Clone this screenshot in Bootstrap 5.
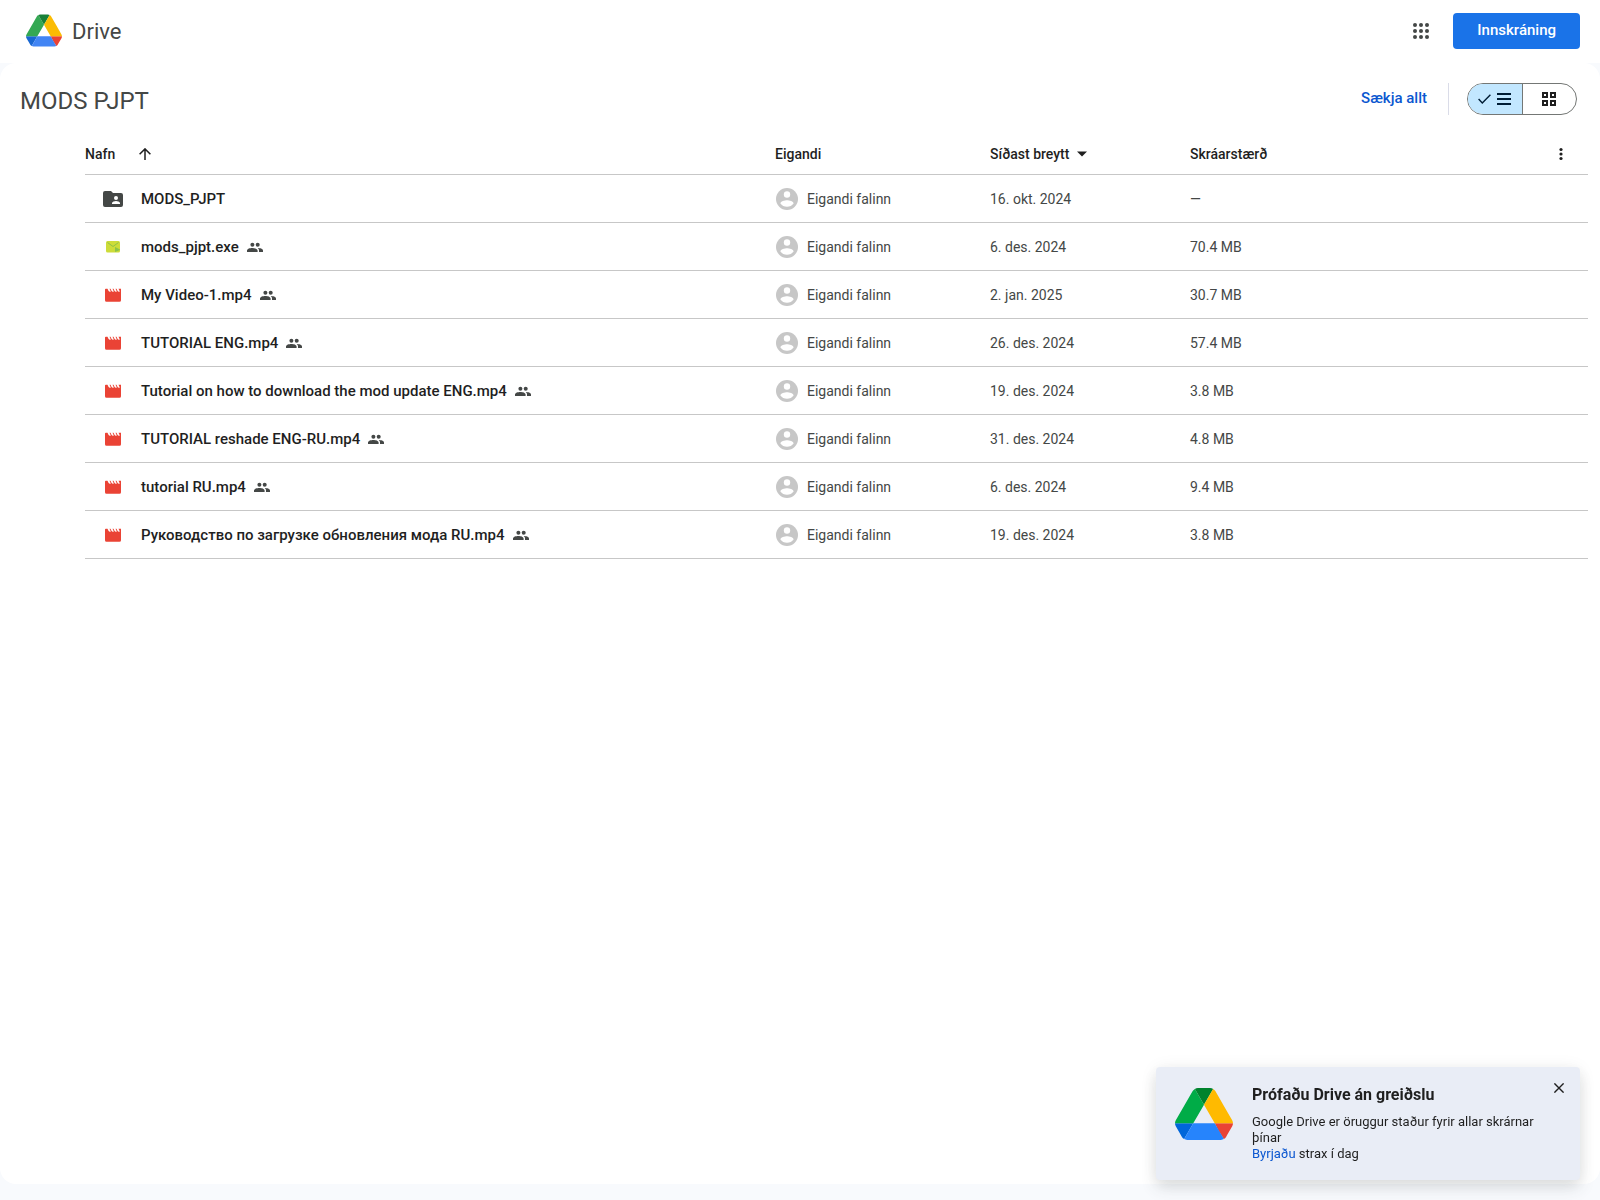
<!DOCTYPE html>
<html lang="is">
<head>
<meta charset="utf-8">
<meta name="viewport" content="width=device-width, initial-scale=1">
<title>MODS PJPT – Google Drive</title>
<link href="https://cdn.jsdelivr.net/npm/bootstrap@5.3.0/dist/css/bootstrap.min.css" rel="stylesheet">
<style>
  body { font-family: Roboto, "Liberation Sans", sans-serif; font-size: 14px; line-height: 20px; color: #1f1f1f; background: #f8fafd; }
  svg { display: block; flex: none; }
  .topbar { height: 63px; padding: 0 20px 2px 26px; }
  .brand-name { font-size: 22px; line-height: 28px; color: #444746; padding: 2px 0 0 2px; }
  .apps-btn { width: 40px; height: 40px; color: #444746; }
  .signin { height: 36px; padding: 0 23px; border-radius: 4px; background: #1a73e8; color: #fff; font-size: 15px; font-weight: 500; }
  .signin:hover { background: #1765cc; color: #fff; }
  .panel { border-radius: 16px; margin-bottom: 16px; padding: 0 12px 0 20px; }
  .folder-bar { height: 68px; padding: 3px 11px 0 0; }
  .folder-title { font-size: 24px; line-height: 32px; font-weight: 400; color: #444746; padding-top: 5px; }
  .download-all { color: #0b57d0; font-size: 15px; font-weight: 500; padding: 6px 21px; }
  .separator { width: 1px; height: 32px; background: #dadce8; margin-right: 18px; }
  .view-toggle { height: 32px; width: 110px; border: 1px solid #747775; border-radius: 16px; overflow: hidden; }
  .view-toggle .btn { flex: 1 1 0; border: 0; padding: 0; border-radius: 0; color: #1f1f1f; gap: 6px; }
  .view-toggle .btn + .btn { border-left: 1px solid #747775; }
  .view-toggle .active { background: #c2e7ff; color: #001d35; }
  .file-list { margin-left: 65px; }
  .file-table { table-layout: fixed; --bs-table-bg: transparent; margin: 0; }
  .file-table th, .file-table td { height: 48px; padding: 2px 0 0; vertical-align: middle; border-bottom: 1px solid #c7c7c7; }
  .file-table thead th { height: 43px; padding-top: 4px; font-size: 14px; font-weight: 500; color: #1f1f1f; }
  .file-table td { color: #444746; font-size: 14px; }
  .file-table .sort-btn { padding: 0; font-size: 14px; line-height: 20px; font-weight: 500; color: #1f1f1f; border: 0; }
  .col-owner { width: 215px; }
  .col-date { width: 200px; }
  .col-size { width: 358px; }
  .col-menu { width: 40px; }
  .type-icon { width: 56px; display: flex; justify-content: center; }
  .file-link { color: #1f1f1f; font-size: 15px; font-weight: 500; text-decoration: none; }
  .promo { right: 20px; bottom: 20px; width: 424px; border-radius: 4px; background: #e9edf6; z-index: 10; padding: 18px 12px 18px 19px; box-shadow: 0 8px 16px rgba(60,64,67,.14), 0 2px 18px rgba(60,64,67,.07); }
  .promo-title { font-size: 16px; line-height: 20px; font-weight: 700; margin-bottom: 9px; }
  .promo-text { font-size: 13px; line-height: 16px; }
  .promo-text a { color: #0b57d0; text-decoration: none; }
  .promo-logo { margin: 3px 19px 0 0; }
  .promo-close { margin-top: -6px; }
</style>
</head>
<body class="d-flex flex-column min-vh-100">

<svg width="0" height="0" class="position-absolute" aria-hidden="true">
  <symbol id="i-drive" viewBox="0 0 87.3 78">
    <path d="M6.6 66.85l3.85 6.65c.8 1.4 1.95 2.5 3.3 3.3l13.75-23.8H0c0 1.55.4 3.1 1.2 4.5z" fill="#0066da"/>
    <path d="M43.65 25L29.9 1.2c-1.35.8-2.5 1.9-3.3 3.3l-25.4 44C.4 49.9 0 51.450 0 53h27.5z" fill="#00ac47"/>
    <path d="M73.55 76.8c1.35-.8 2.5-1.9 3.3-3.3l1.6-2.75L86.100 57.5c.8-1.4 1.2-2.95 1.2-4.5H59.798l5.852 11.5z" fill="#ea4335"/>
    <path d="M43.65 25L57.400 1.2C56.050.4 54.500 0 52.900 0H34.400c-1.6 0-3.150.450-4.5 1.2z" fill="#00832d"/>
    <path d="M59.800 53H27.500L13.750 76.800c1.350.8 2.900 1.200 4.500 1.200h50.800c1.600 0 3.150-.450 4.500-1.200z" fill="#2684fc"/>
    <path d="M73.400 26.500L60.700 4.500c-.8-1.400-1.950-2.500-3.300-3.300L43.650 25l16.150 28h27.450c0-1.550-.4-3.100-1.200-4.500z" fill="#ffba00"/>
  </symbol>
  <symbol id="i-drive-bar" viewBox="0 0 87.3 78">
    <path d="M6.6 66.85l3.85 6.65c.8 1.4 1.95 2.5 3.3 3.3l13.75-23.8H0c0 1.55.4 3.1 1.2 4.5z" fill="#1967d2"/>
    <path d="M43.65 25L29.9 1.2c-1.35.8-2.5 1.9-3.3 3.3l-25.4 44C.4 49.9 0 51.450 0 53h27.5z" fill="#34a853"/>
    <path d="M73.55 76.8c1.35-.8 2.5-1.9 3.3-3.3l1.6-2.75L86.100 57.5c.8-1.4 1.2-2.95 1.2-4.5H59.798l5.852 11.5z" fill="#ea4335"/>
    <path d="M43.65 25L57.400 1.2C56.050.4 54.500 0 52.900 0H34.400c-1.6 0-3.150.450-4.5 1.2z" fill="#188038"/>
    <path d="M59.800 53H27.500L13.750 76.800c1.350.8 2.900 1.200 4.500 1.200h50.800c1.600 0 3.150-.450 4.500-1.200z" fill="#4285f4"/>
    <path d="M73.400 26.500L60.700 4.500c-.8-1.400-1.950-2.500-3.300-3.300L43.650 25l16.150 28h27.450c0-1.550-.4-3.100-1.200-4.500z" fill="#fbbc04"/>
  </symbol>
  <symbol id="i-video" viewBox="0 0 16 16"><path d="M0 2.500V13.300a1.500 1.500 0 0 0 1.500 1.500h13a1.500 1.500 0 0 0 1.500-1.500V1.800h-2.500l1.300 2.700q-1.400.6-2.200-.5l-1.100-2.200h-1l1.300 2.700q-1.400.6-2.200-.5l-1.100-2.200h-1l1.300 2.700q-1.400.6-2.200-.5L5.500 1.800h-1l1.300 2.700q-1.400.6-2.200-.5L2.500 1.800H.8a.8.8 0 0 0-.8.700z" fill="#ea4335"/></symbol>
  <symbol id="i-people" viewBox="0 0 16 16"><g fill="#444746"><circle cx="5.400" cy="5.800" r="2"/><circle cx="10.700" cy="5.800" r="2"/><path d="M0 13v-1.400C0 9.900 3 9.100 5.300 9.100s5.300.8 5.300 2.500V13zM12 13v-1.400c0-1.100-.5-1.900-1.300-2.500 2.300 0 5.300.7 5.300 2.500V13z"/></g></symbol>
  <symbol id="i-owner" viewBox="0 0 22 22"><circle cx="11" cy="11" r="11" fill="#c7c7c7"/><circle cx="11" cy="6.500" r="3.200" fill="#fff"/><path d="M4.400 15.500c0-2.200 4.400-3.300 6.600-3.300s6.600 1.100 6.600 3.300c-1.400 2-3.900 3.300-6.600 3.300s-5.200-1.300-6.600-3.300z" fill="#fff"/></symbol>
</svg>

<header class="topbar bg-white d-flex align-items-center justify-content-between">
  <a href="#" class="d-flex align-items-center gap-2 text-decoration-none">
    <svg width="36" height="33"><use href="#i-drive-bar"/></svg>
    <span class="brand-name">Drive</span>
  </a>
  <div class="d-flex align-items-center gap-2">
    <button class="apps-btn btn p-0 me-1 d-flex align-items-center justify-content-center" aria-label="Google forrit">
      <svg width="16" height="16" viewBox="0 0 16 16" fill="currentColor"><circle cx="2" cy="2" r="2"/><circle cx="8" cy="2" r="2"/><circle cx="14" cy="2" r="2"/><circle cx="2" cy="8" r="2"/><circle cx="8" cy="8" r="2"/><circle cx="14" cy="8" r="2"/><circle cx="2" cy="14" r="2"/><circle cx="8" cy="14" r="2"/><circle cx="14" cy="14" r="2"/></svg>
    </button>
    <a href="#" role="button" class="signin btn d-flex align-items-center">Innskráning</a>
  </div>
</header>

<main class="panel bg-white flex-grow-1">
  <div class="folder-bar d-flex align-items-center justify-content-between">
    <h1 class="folder-title m-0">MODS PJPT</h1>
    <div class="d-flex align-items-center">
      <button class="download-all btn border-0">Sækja allt</button>
      <span class="separator"></span>
      <div class="view-toggle d-flex" role="group" aria-label="Útlit">
        <button class="btn active d-flex align-items-center justify-content-center" aria-pressed="true" aria-label="Listi">
          <svg width="13" height="10" viewBox="0 0 13 10" fill="none" stroke="currentColor" stroke-width="1.400"><path d="M.6 5l3.700 4L12.400.7"/></svg>
          <svg width="14" height="12" viewBox="0 0 14 12" fill="currentColor"><path d="M0 0h14v2H0zM0 5h14v2H0zM0 10h14v2H0z"/></svg>
        </button>
        <button class="btn d-flex align-items-center justify-content-center" aria-pressed="false" aria-label="Tafla">
          <svg width="14" height="14" viewBox="0 0 14 14" fill="none" stroke="currentColor" stroke-width="2"><path d="M1 1h4v4H1zM9 1h4v4H9zM1 9h4v4H1zM9 9h4v4H9z"/></svg>
        </button>
      </div>
    </div>
  </div>

  <div class="file-list">
    <table class="file-table table">
      <thead>
        <tr>
          <th scope="col"><button class="sort-btn btn d-flex align-items-center gap-4">Nafn
            <svg width="12" height="12" viewBox="0 0 12 12" fill="none" stroke="currentColor" stroke-width="1.500"><path d="M6 12V1M.6 6.300L6 .9l5.400 5.400"/></svg></button></th>
          <th scope="col" class="col-owner">Eigandi</th>
          <th scope="col" class="col-date"><button class="sort-btn btn d-flex align-items-center">Síðast breytt
            <svg class="ms-2" width="10" height="6" viewBox="0 0 10 6" fill="currentColor"><path d="M0 .5h10L5 5.500z"/></svg></button></th>
          <th scope="col" class="col-size">Skráarstærð</th>
          <th scope="col" class="col-menu"><button class="sort-btn btn ps-2 d-flex align-items-center" aria-label="Fleiri valkostir"><svg width="12" height="14" viewBox="0 0 12 14" fill="currentColor"><circle cx="5" cy="2.500" r="1.600"/><circle cx="5" cy="7" r="1.600"/><circle cx="5" cy="11.500" r="1.600"/></svg></button></th>
        </tr>
      </thead>
      <tbody>
        <tr>
          <td><div class="d-flex align-items-center"><span class="type-icon"><svg width="20" height="16" viewBox="0 0 20 16"><path d="M2 0h6l2 2h8a2 2 0 0 1 2 2v10a2 2 0 0 1-2 2H2a2 2 0 0 1-2-2V2a2 2 0 0 1 2-2z" fill="#444746"/><circle cx="13" cy="7" r="2" fill="#fff"/><path d="M9 13v-1c0-1.300 2.700-2 4-2s4 .7 4 2v1z" fill="#fff"/></svg></span><a href="#" class="file-link">MODS_PJPT</a></div></td>
          <td><div class="d-flex align-items-center gap-2"><svg width="24" height="22"><use href="#i-owner"/></svg>Eigandi falinn</div></td>
          <td>16. okt. 2024</td><td>—</td><td></td>
        </tr>
        <tr>
          <td><div class="d-flex align-items-center"><span class="type-icon"><svg width="14" height="12" viewBox="0 0 14 12"><rect width="14" height="11.500" rx="1.500" fill="#cddc39"/><path d="M1.500 1.500L7 5.500l5.500-4" fill="none" stroke="#8bc34a"/><path d="M9 6l5.500 2.700L9 11z" fill="#8bc34a"/></svg></span><a href="#" class="file-link me-2">mods_pjpt.exe</a><svg width="16" height="16"><use href="#i-people"/></svg></div></td>
          <td><div class="d-flex align-items-center gap-2"><svg width="24" height="22"><use href="#i-owner"/></svg>Eigandi falinn</div></td>
          <td>6. des. 2024</td><td>70.4 MB</td><td></td>
        </tr>
        <tr>
          <td><div class="d-flex align-items-center"><span class="type-icon"><svg width="16" height="16"><use href="#i-video"/></svg></span><a href="#" class="file-link me-2">My Video-1.mp4</a><svg width="16" height="16"><use href="#i-people"/></svg></div></td>
          <td><div class="d-flex align-items-center gap-2"><svg width="24" height="22"><use href="#i-owner"/></svg>Eigandi falinn</div></td>
          <td>2. jan. 2025</td><td>30.7 MB</td><td></td>
        </tr>
        <tr>
          <td><div class="d-flex align-items-center"><span class="type-icon"><svg width="16" height="16"><use href="#i-video"/></svg></span><a href="#" class="file-link me-2">TUTORIAL ENG.mp4</a><svg width="16" height="16"><use href="#i-people"/></svg></div></td>
          <td><div class="d-flex align-items-center gap-2"><svg width="24" height="22"><use href="#i-owner"/></svg>Eigandi falinn</div></td>
          <td>26. des. 2024</td><td>57.4 MB</td><td></td>
        </tr>
        <tr>
          <td><div class="d-flex align-items-center"><span class="type-icon"><svg width="16" height="16"><use href="#i-video"/></svg></span><a href="#" class="file-link me-2">Tutorial on how to download the mod update ENG.mp4</a><svg width="16" height="16"><use href="#i-people"/></svg></div></td>
          <td><div class="d-flex align-items-center gap-2"><svg width="24" height="22"><use href="#i-owner"/></svg>Eigandi falinn</div></td>
          <td>19. des. 2024</td><td>3.8 MB</td><td></td>
        </tr>
        <tr>
          <td><div class="d-flex align-items-center"><span class="type-icon"><svg width="16" height="16"><use href="#i-video"/></svg></span><a href="#" class="file-link me-2">TUTORIAL reshade ENG-RU.mp4</a><svg width="16" height="16"><use href="#i-people"/></svg></div></td>
          <td><div class="d-flex align-items-center gap-2"><svg width="24" height="22"><use href="#i-owner"/></svg>Eigandi falinn</div></td>
          <td>31. des. 2024</td><td>4.8 MB</td><td></td>
        </tr>
        <tr>
          <td><div class="d-flex align-items-center"><span class="type-icon"><svg width="16" height="16"><use href="#i-video"/></svg></span><a href="#" class="file-link me-2">tutorial RU.mp4</a><svg width="16" height="16"><use href="#i-people"/></svg></div></td>
          <td><div class="d-flex align-items-center gap-2"><svg width="24" height="22"><use href="#i-owner"/></svg>Eigandi falinn</div></td>
          <td>6. des. 2024</td><td>9.4 MB</td><td></td>
        </tr>
        <tr>
          <td><div class="d-flex align-items-center"><span class="type-icon"><svg width="16" height="16"><use href="#i-video"/></svg></span><a href="#" class="file-link me-2">Руководство по загрузке обновления мода RU.mp4</a><svg width="16" height="16"><use href="#i-people"/></svg></div></td>
          <td><div class="d-flex align-items-center gap-2"><svg width="24" height="22"><use href="#i-owner"/></svg>Eigandi falinn</div></td>
          <td>19. des. 2024</td><td>3.8 MB</td><td></td>
        </tr>
      </tbody>
    </table>
  </div>
</main>

<aside class="promo position-fixed d-flex align-items-start">
  <svg class="promo-logo" width="58" height="52"><use href="#i-drive"/></svg>
  <div class="flex-grow-1">
    <h2 class="promo-title">Prófaðu Drive án greiðslu</h2>
    <p class="promo-text m-0">Google Drive er öruggur staður fyrir allar skrárnar þínar<br><a href="#">Byrjaðu</a> strax í dag</p>
  </div>
  <button class="promo-close btn p-1 border-0 lh-1" aria-label="Loka"><svg width="10" height="10" viewBox="0 0 10 10" fill="none" stroke="#1f1f1f" stroke-width="1.400"><path d="M.4.400l9.200 9.200M9.600.400L.4 9.600"/></svg></button>
</aside>

<script src="https://cdn.jsdelivr.net/npm/bootstrap@5.3.0/dist/js/bootstrap.bundle.min.js"></script>
</body>
</html>
